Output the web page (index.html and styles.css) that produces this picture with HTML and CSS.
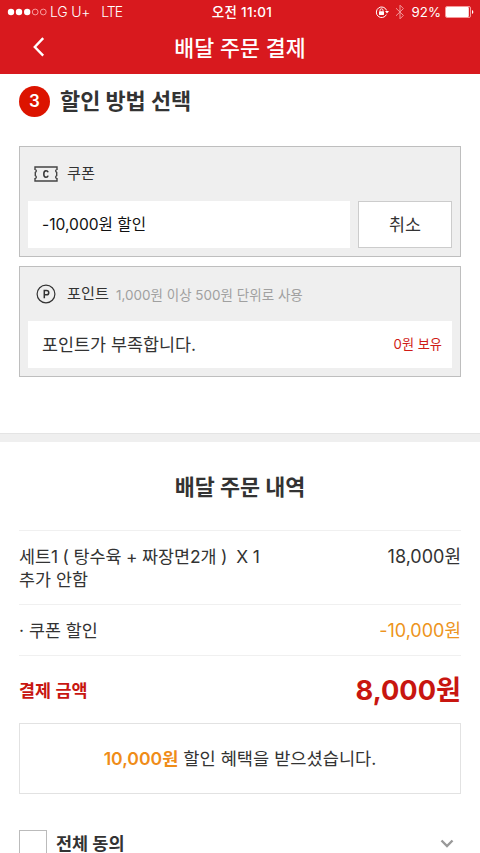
FILE: index.html
```html
<!DOCTYPE html>
<html lang="ko">
<head>
<meta charset="utf-8">
<title>배달 주문 결제</title>
<link rel="stylesheet" href="styles.css">
</head>
<body>
<div class="screen">
  <header class="top">
    <div class="status">
      <div class="carrier">
        <svg class="signal" width="40" height="8" viewBox="0 0 40 8"><g fill="#fff"><circle cx="4" cy="4" r="3.2"/><circle cx="12" cy="4" r="3.2"/><circle cx="20.2" cy="4" r="3.2"/></g><g fill="none" stroke="#fbb" stroke-width=".8"><circle cx="28.2" cy="4" r="2.9"/><circle cx="36.3" cy="4" r="2.9"/></g></svg>
        <span class="network">LG U+</span><span class="network lte">LTE</span>
      </div>
      <div class="clock">오전 11:01</div>
      <div class="indicators">
        <svg class="lock" width="14" height="12" viewBox="0 0 14 12"><path d="M11.4 8.6A5.3 5.3 0 1 1 11.6 4.4" fill="none" stroke="#fff" stroke-width="1"/><path d="M10 5h4l-2 2.5z" fill="#fff"/><rect x="4" y="5.3" width="5" height="3.6" rx=".4" fill="#fff"/><path d="M5 5.5V4.3a1.5 1.5 0 0 1 3 0v1.2" fill="none" stroke="#fff" stroke-width=".9"/></svg>
        <svg class="bluetooth" width="10" height="16" viewBox="0 0 10 16"><path d="M1 4.2l7.4 7.2L5 14.8V1.2l3.4 3.4L1 11.8" fill="none" stroke="#f29a9b" stroke-width="1"/></svg>
        <span class="percent">92%</span>
        <svg class="battery" width="29" height="12" viewBox="0 0 29 12"><rect x=".5" y=".5" width="25" height="11" rx="1.5" fill="none" stroke="#fbb" stroke-width=".8"/><rect x="1" y="1" width="22.8" height="10" rx="1" fill="#fff"/><path d="M27 4c1.8.6 1.8 3.4 0 4z" fill="#fff"/></svg>
      </div>
    </div>
    <div class="nav">
      <svg class="back" width="12" height="20" viewBox="0 0 12 20"><path d="M10.2 1.2L1.8 10l8.4 8.6" fill="none" stroke="#fff" stroke-width="2.4"/></svg>
      <h1 class="nav-title">배달 주문 결제</h1>
    </div>
  </header>

  <section class="discount">
    <h2 class="step"><span class="step-number">3</span><span class="step-title">할인 방법 선택</span></h2>
    <div class="panel">
      <div class="panel-head">
        <svg class="icon" width="24" height="16" viewBox="0 0 24 16"><path d="M1 1h22v2.4c-1.7.4-1.7 2.4-.3 3v3.2c-1.4.6-1.4 2.6.3 3V15H1v-2.4c1.7-.4 1.7-2.4.3-3V6.4c1.4-.6 1.4-2.6-.3-3z" fill="none" stroke="#444" stroke-width="1.4"/><path d="M14.1 6.3c-.3-1-1-1.600-2.100-1.600-1.500 0-2.200 1.200-2.200 3.300s.7 3.300 2.200 3.300c1.100 0 1.900-.7 2.100-1.700" fill="none" stroke="#333" stroke-width="1.5"/></svg>
        <span class="label">쿠폰</span>
      </div>
      <div class="panel-body">
        <div class="field coupon-value">-10,000원 할인</div>
        <button class="cancel">취소</button>
      </div>
    </div>
    <div class="panel">
      <div class="panel-head">
        <svg class="icon" width="24" height="20" viewBox="0 0 24 20"><circle cx="12" cy="10" r="8.9" fill="none" stroke="#333" stroke-width="1.2"/><path d="M10.3 14.2V6.500h2.200c3 0 3 4.300 0 4.300h-2.200" fill="none" stroke="#333" stroke-width="1.5"/></svg>
        <span class="label">포인트</span><span class="hint">1,000원 이상 500원 단위로 사용</span>
      </div>
      <div class="panel-body">
        <div class="field"><span class="point-message">포인트가 부족합니다.</span><span class="balance">0원 보유</span></div>
      </div>
    </div>
  </section>

  <section class="order">
    <h2 class="order-title">배달 주문 내역</h2>
    <div class="row item"><div><div class="item-name">세트1 ( 탕수육 + 짜장면2개 )&nbsp; X 1</div><div class="item-option">추가 안함</div></div><span class="price">18,000원</span></div>
    <div class="row coupon-row"><span class="coupon-name">· 쿠폰 할인</span><span class="price minus">-10,000원</span></div>
    <div class="row total"><span class="total-label">결제 금액</span><strong class="total-price">8,000원</strong></div>
    <div class="benefit"><p class="benefit-text"><b>10,000원</b> 할인 혜택을 받으셨습니다.</p></div>
    <div class="agree"><span class="checkbox"></span><span class="agree-label">전체 동의</span><svg class="chevron" width="14" height="10" viewBox="0 0 14 10"><path d="M1.5 1.5L7 7l5.500-5.500" fill="none" stroke="#999" stroke-width="2.4"/></svg></div>
  </section>
</div>
</body>
</html>
```
FILE: styles.css
```css
* { box-sizing: border-box; }
body { margin: 0; background: #fff; color: #333; font-family: Inter, "Noto Sans CJK KR", sans-serif; }
h1, h2, p { margin: 0; }
span, h1, h2, p, b { white-space: nowrap; }
.screen { width: 480px; height: 853px; overflow: hidden; }
svg { display: block; flex: none; }

.top { height: 74px; background: #d8191e; color: #fff; }
.status { height: 25px; display: grid; grid-template-columns: 1fr auto 1fr; align-items: center; padding: 0 6px 1px 7px; font-size: 13.3px; line-height: 24px; }
.carrier, .indicators { display: flex; align-items: center; }
.network { margin-left: 3px; font-weight: 300; font-size: 14px; letter-spacing: -0.2px; }
.lte { margin-left: 11px; letter-spacing: -1px; }
.clock { font-size: 13.5px; font-weight: 500; letter-spacing: 0.3px; padding-left: 3px; }
.indicators { justify-content: flex-end; }
.bluetooth { margin-left: 6px; }
.percent { margin: 0 4px 0 7px; }
.nav { height: 49px; display: grid; grid-template-columns: 1fr auto 1fr; align-items: center; padding: 0 33px; }
.nav-title { font-size: 21.7px; font-weight: 500; line-height: 45px; padding-bottom: 3px; }
.back { margin-bottom: 5px; }

.discount { height: 359px; padding: 12px 19px 0; }
.step { display: flex; align-items: center; height: 31px; margin-bottom: 29px; }
.step-number { width: 31px; height: 31px; border-radius: 50%; background: #dc1400; color: #fff; font-size: 17px; font-weight: 600; line-height: 31px; text-align: center; }
.step-title { margin-left: 10px; font-size: 21.9px; line-height: 31px; font-weight: 700; }
.panel { height: 111px; margin-bottom: 9px; padding: 0 8px; border: 1px solid #bebebe; background: #efefef; }
.panel-head { height: 54px; display: flex; align-items: center; padding-left: 6px; }
.label { margin-left: 9px; font-size: 15.2px; line-height: 24px; }
.hint { margin-left: 7px; font-size: 13.5px; color: #a0a0a0; }
.panel-body { display: flex; gap: 8px; height: 47px; }
.field { flex: 1; display: flex; align-items: center; justify-content: space-between; padding: 0 10px 2px 14px; background: #fff; font-size: 17.4px; }
.coupon-value { color: #111; font-size: 15.6px; padding-bottom: 3px; }
.cancel { width: 94px; padding: 0 0 3px; border: 1px solid #ccc; background: #fff; color: #333; font: inherit; font-size: 17.4px; }
.balance { color: #cf1b16; font-size: 13.2px; }

.order { padding: 0 19px; border-top: 1px solid #e4e4e4; }
.order::before { content: ""; display: block; height: 8px; margin: 0 -19px; background: #efefef; }
.order-title { height: 88px; font-size: 21.8px; line-height: 90px; font-weight: 700; text-align: center; }
.row { display: flex; justify-content: space-between; border-top: 1px solid #f0f0f0; font-size: 17.4px; line-height: 23px; }
.item { height: 74px; padding-top: 14px; }
.item-name { word-spacing: -0.4px; }
.price { font-size: 18px; }
.coupon-row { height: 51px; line-height: 51px; }
.minus { color: #ed9420; }
.total { height: 68px; line-height: 69px; color: #c81610; }
.total-label { font-weight: 600; }
.total-price { font-size: 27.2px; font-weight: 700; }
.benefit { height: 71px; border: 1px solid #e2e2e2; text-align: center; font-size: 17.6px; line-height: 70px; }
.benefit b { color: #ef8c18; font-weight: 600; }
.agree { display: flex; height: 28px; margin-top: 36px; align-items: center; }
.checkbox { width: 28px; height: 28px; border: 1px solid #bbb; }
.agree-label { margin-left: 9px; font-size: 17.5px; line-height: 28px; font-weight: 700; }
.chevron { margin-left: auto; margin-right: 7px; }
```
